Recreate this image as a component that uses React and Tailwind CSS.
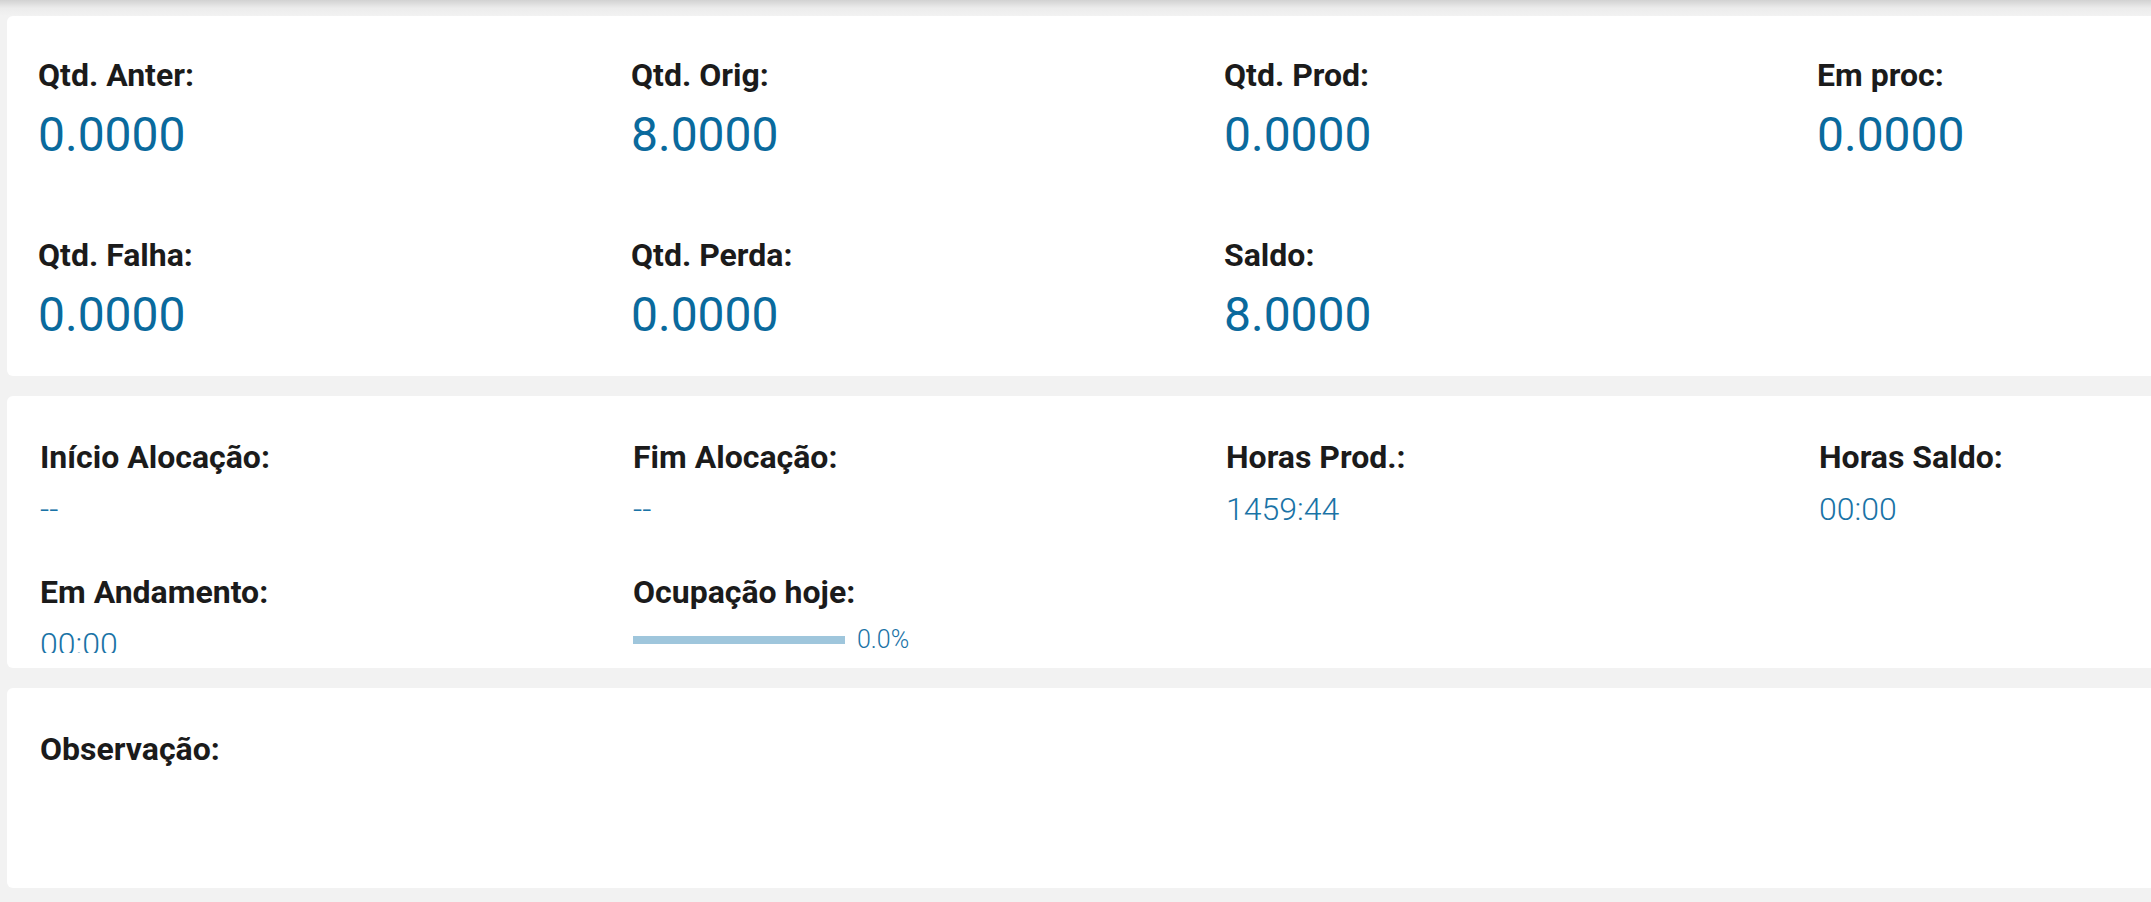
import React from 'react';

const qtdRows = [
  [
    { label: 'Qtd. Anter:', value: '0.0000' },
    { label: 'Qtd. Orig:', value: '8.0000' },
    { label: 'Qtd. Prod:', value: '0.0000' },
    { label: 'Em proc:', value: '0.0000' },
  ],
  [
    { label: 'Qtd. Falha:', value: '0.0000' },
    { label: 'Qtd. Perda:', value: '0.0000' },
    { label: 'Saldo:', value: '8.0000' },
  ],
];

const horasRow = [
  { label: 'Início Alocação:', value: '--' },
  { label: 'Fim Alocação:', value: '--' },
  { label: 'Horas Prod.:', value: '1459:44' },
  { label: 'Horas Saldo:', value: '00:00' },
];

const Label = ({ children }) => (
  <div className="text-[32px] leading-[38px] font-bold text-[#1b1b1b]">{children}</div>
);

const App = () => {
  return (
    <div
      className="w-[2151px] h-[902px] overflow-hidden bg-[#f2f2f2]"
      style={{ fontFamily: 'Roboto, "Noto Sans", sans-serif' }}
    >
      {/* sombra do cabeçalho */}
      <div className="h-[16px] bg-gradient-to-b from-[#d2d2d2] via-[#ececec] to-[#f2f2f2]" />

      <div className="flex flex-col gap-[20px] pl-[7px]">
        {/* Quantidades */}
        <div className="w-[2450px] bg-white rounded-[6px] pt-[40px] pb-[32px] pl-[31px]">
          <div className="flex flex-col gap-[72px]">
            {qtdRows.map((row, i) => (
              <div key={i} className="grid grid-cols-[593px_593px_593px_593px]">
                {row.map((item) => (
                  <div key={item.label}>
                    <Label>{item.label}</Label>
                    <div className="mt-[12px] text-[48px] leading-[58px] text-[#0a6a9d]">
                      {item.value}
                    </div>
                  </div>
                ))}
              </div>
            ))}
          </div>
        </div>

        {/* Horas */}
        <div className="w-[2450px] bg-white rounded-[6px] pt-[42px] pb-[15px] pl-[33px]">
          <div className="h-[215px] overflow-hidden flex flex-col gap-[45px]">
            <div className="grid grid-cols-[593px_593px_593px_593px]">
              {horasRow.map((item) => (
                <div key={item.label}>
                  <Label>{item.label}</Label>
                  <div className="mt-[14px] text-[32px] leading-[38px] font-light text-[#1a73a6]">
                    {item.value}
                  </div>
                </div>
              ))}
            </div>
            <div className="grid grid-cols-[593px_593px_593px_593px]">
              <div>
                <Label>Em Andamento:</Label>
                <div className="mt-[14px] text-[32px] leading-[38px] font-light text-[#1a73a6]">
                  00:00
                </div>
              </div>
              <div>
                <Label>Ocupação hoje:</Label>
                <div className="mt-[14px] flex items-center gap-[12px]">
                  <div className="w-[212px] h-[8px] bg-[#9fc6dc]">
                    <div className="h-full bg-[#1a73a6]" style={{ width: '0%' }} />
                  </div>
                  <span className="text-[25px] leading-[30px] font-light text-[#1a73a6]">0.0%</span>
                </div>
              </div>
            </div>
          </div>
        </div>

        {/* Observação */}
        <div className="w-[2450px] h-[200px] bg-white rounded-[6px] pt-[42px] pl-[33px]">
          <Label>Observação:</Label>
        </div>
      </div>
    </div>
  );
};

export default App;
